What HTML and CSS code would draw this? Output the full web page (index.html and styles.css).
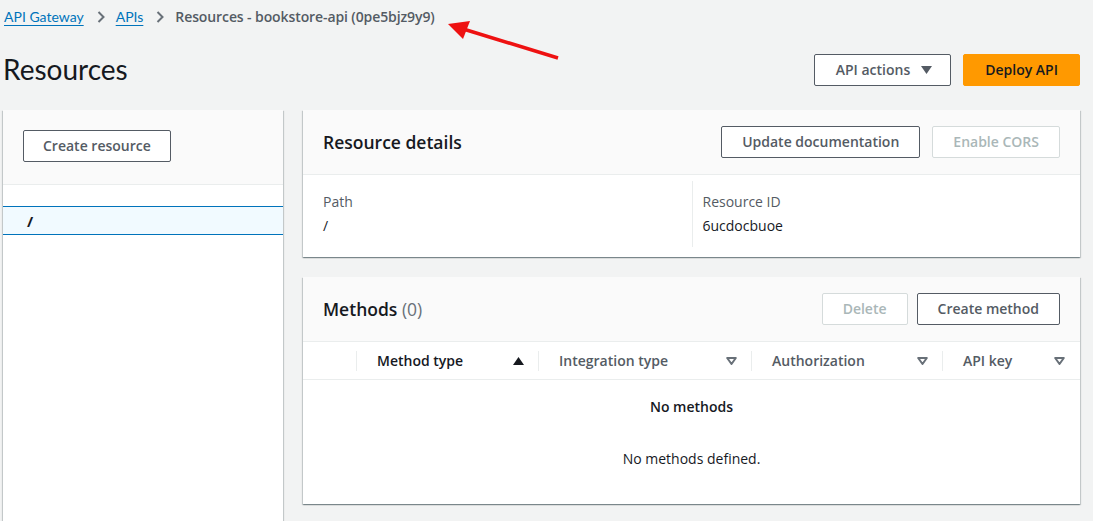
FILE: index.html
```html
<!DOCTYPE html>
<html lang="en">
<head>
<meta charset="utf-8">
<title>Resources - bookstore-api</title>
<link rel="stylesheet" href="styles.css">
</head>
<body>
<div class="page">
  <nav class="breadcrumbs">
    <a href="#" class="crumb-link">API Gateway</a>
    <svg class="chev" width="8" height="12" viewBox="0 0 8 12"><path d="M1.5 1 L6.5 6 L1.5 11" fill="none" stroke="#687078" stroke-width="2"/></svg>
    <a href="#" class="crumb-link">APIs</a>
    <svg class="chev" width="8" height="12" viewBox="0 0 8 12"><path d="M1.5 1 L6.5 6 L1.5 11" fill="none" stroke="#687078" stroke-width="2"/></svg>
    <span class="crumb-current">Resources - bookstore-api (0pe5bjz9y9)</span>
    <svg class="arrow" width="120" height="46" viewBox="0 0 120 46"><line x1="112" y1="40" x2="14" y2="10" stroke="#ee1111" stroke-width="3.5"/><polygon points="2,6 24,3 17,21" fill="#ee1111"/></svg>
  </nav>

  <header class="page-header">
    <h1 class="title">Resources</h1>
    <div class="header-actions">
      <button class="btn btn-normal btn-dropdown">API actions
        <svg class="caret" width="11" height="8" viewBox="0 0 11 8"><polygon points="0,0 11,0 5.5,8" fill="#545b64"/></svg>
      </button>
      <button class="btn btn-primary">Deploy API</button>
    </div>
  </header>

  <div class="layout">
    <aside class="tree-panel">
      <div class="tree-top">
        <button class="btn btn-normal">Create resource</button>
      </div>
      <div class="tree-body">
        <div class="tree-row selected">/</div>
      </div>
    </aside>

    <main class="main">
      <section class="card">
        <div class="card-header">
          <h2 class="card-title">Resource details</h2>
          <div class="card-actions">
            <button class="btn btn-normal">Update documentation</button>
            <button class="btn btn-disabled">Enable CORS</button>
          </div>
        </div>
        <div class="details">
          <div class="detail-col">
            <div class="label">Path</div>
            <div class="value">/</div>
          </div>
          <div class="detail-col divided">
            <div class="label">Resource ID</div>
            <div class="value">6ucdocbuoe</div>
          </div>
        </div>
      </section>

      <section class="card">
        <div class="card-header">
          <h2 class="card-title">Methods <span class="count">(0)</span></h2>
          <div class="card-actions">
            <button class="btn btn-disabled">Delete</button>
            <button class="btn btn-normal">Create method</button>
          </div>
        </div>
        <div class="table-head">
          <div class="th th-select"></div>
          <div class="th th-method"><span class="th-label strong">Method type</span>
            <svg width="11" height="8" viewBox="0 0 11 8"><polygon points="0,8 11,8 5.5,0" fill="#16191f"/></svg>
          </div>
          <div class="th th-integration"><span class="th-label">Integration type</span>
            <svg width="11" height="8" viewBox="0 0 11 8"><polygon points="1.2,1 9.8,1 5.5,7" fill="none" stroke="#687078" stroke-width="2" stroke-linejoin="round"/></svg>
          </div>
          <div class="th th-auth"><span class="th-label">Authorization</span>
            <svg width="11" height="8" viewBox="0 0 11 8"><polygon points="1.2,1 9.8,1 5.5,7" fill="none" stroke="#687078" stroke-width="2" stroke-linejoin="round"/></svg>
          </div>
          <div class="th th-key"><span class="th-label">API key</span>
            <svg width="11" height="8" viewBox="0 0 11 8"><polygon points="1.2,1 9.8,1 5.5,7" fill="none" stroke="#687078" stroke-width="2" stroke-linejoin="round"/></svg>
          </div>
        </div>
        <div class="empty">
          <div class="empty-title">No methods</div>
          <div class="empty-text">No methods defined.</div>
        </div>
      </section>
    </main>
  </div>
</div>
</body>
</html>
```

FILE: styles.css
```css
* { box-sizing: border-box; }
html, body { margin: 0; padding: 0; }
body {
  background: #f2f3f3;
  font-family: "Open Sans", "Liberation Sans", Arial, sans-serif;
  font-size: 14px;
  color: #16191f;
  overflow: hidden;
}
.page { padding: 0 13px 0 3px; height: 521px; }

.crumb-link, .title { font-family: Lato, "Liberation Sans", Arial, sans-serif; }

.breadcrumbs {
  position: relative;
  height: 32px;
  display: flex;
  align-items: center;
  padding-left: 1px;
  padding-top: 1px;
  line-height: 20px;
}
.crumb-link { color: #0073bb; text-decoration: underline; text-underline-offset: 3px; }
.chev { margin: 0 11px 0 13px; }
.crumb-current { color: #545b64; font-weight: 600; letter-spacing: -0.1px; }
.arrow { position: absolute; left: 443px; top: 18px; }

.page-header {
  display: flex;
  align-items: center;
  justify-content: space-between;
  margin-top: 22px;
  height: 32px;
  margin-bottom: 24px;
}
.title { margin: 0; font-size: 28px; font-weight: 400; line-height: 36px; position: relative; top: -1px; }
.header-actions { display: flex; gap: 12px; }

.btn {
  font-family: inherit;
  font-size: 14px;
  font-weight: 600;
  height: 32px;
  padding: 0 20px;
  border-radius: 2px;
  display: inline-flex;
  align-items: center;
  justify-content: center;
  gap: 11px;
  cursor: pointer;
  line-height: 20px;
}
.btn-normal { background: #fff; border: 1px solid #545b64; color: #545b64; }
.btn-dropdown { padding: 0 18px 0 21px; }
.btn-primary { background: #ff9900; border: 1px solid #ff9900; color: #16191f; padding: 0 21px; }
.btn-disabled { background: #fff; border: 1px solid #d5dbdb; color: #aab7b8; }

.layout { display: flex; gap: 20px; align-items: flex-start; }

.tree-panel {
  width: 280px;
  flex: none;
  background: #fff;
  min-height: 420px;
  box-shadow: 0 1px 1px 0 rgba(0,28,36,.3), 1px 1px 1px 0 rgba(0,28,36,.15), -1px 1px 1px 0 rgba(0,28,36,.15);
}
.tree-top {
  background: #fafafa;
  padding: 20px 20px 22px;
  border-bottom: 1px solid #eaeded;
}
.tree-top .btn { padding: 0 19px; }
.tree-body { padding-top: 21px; }
.tree-row {
  height: 29px;
  padding-left: 24px;
  display: flex;
  align-items: center;
  font-weight: 700;
  font-size: 15px;
}
.tree-row.selected {
  background: #f1faff;
  border-top: 1px solid #0073bb;
  border-bottom: 1px solid #0073bb;
}

.main { flex: 1; display: flex; flex-direction: column; gap: 20px; }
.card {
  background: #fff;
  box-shadow: 0 1px 1px 0 rgba(0,28,36,.3), 1px 1px 1px 0 rgba(0,28,36,.15), -1px 1px 1px 0 rgba(0,28,36,.15);
}
.card-header {
  background: #fafafa;
  display: flex;
  align-items: center;
  justify-content: space-between;
  padding: 16px 20px;
  border-bottom: 1px solid #eaeded;
}
.card-title { margin: 0; font-size: 17.5px; font-weight: 600; line-height: 30px; }
.count { font-weight: 400; color: #687078; }
.card-actions { display: flex; gap: 12px; }
.card-actions .btn-disabled + .btn-normal { margin-left: -3px; }

.details {
  display: grid;
  grid-template-columns: 1fr 1fr;
  padding: 6px 20px 10px;
}
.detail-col { padding: 10px 0; }
.detail-col.divided { border-left: 1px solid #eaeded; padding-left: 10px; }
.label { color: #545b64; line-height: 22px; }
.value { line-height: 22px; margin-top: 2px; }

.table-head {
  display: flex;
  height: 38px;
  align-items: center;
  border-bottom: 1px solid #eaeded;
}
.th {
  height: 20px;
  display: flex;
  align-items: center;
  justify-content: space-between;
  padding: 0 14px 0 20px;
  border-left: 1px solid #eaeded;
  font-weight: 600;
  color: #545b64;
}
.th-select { width: 53px; border-left: none; padding: 0; }
.th-method { width: 182px; }
.th-integration { width: 213px; }
.th-auth { width: 191px; }
.th-key { flex: 1; padding-right: 15px; }
.th-label.strong { color: #16191f; }

.empty { text-align: center; padding: 17px 0 35px; }
.empty-title { font-weight: 600; line-height: 20px; }
.empty-text { line-height: 20px; margin-top: 32px; }
```
